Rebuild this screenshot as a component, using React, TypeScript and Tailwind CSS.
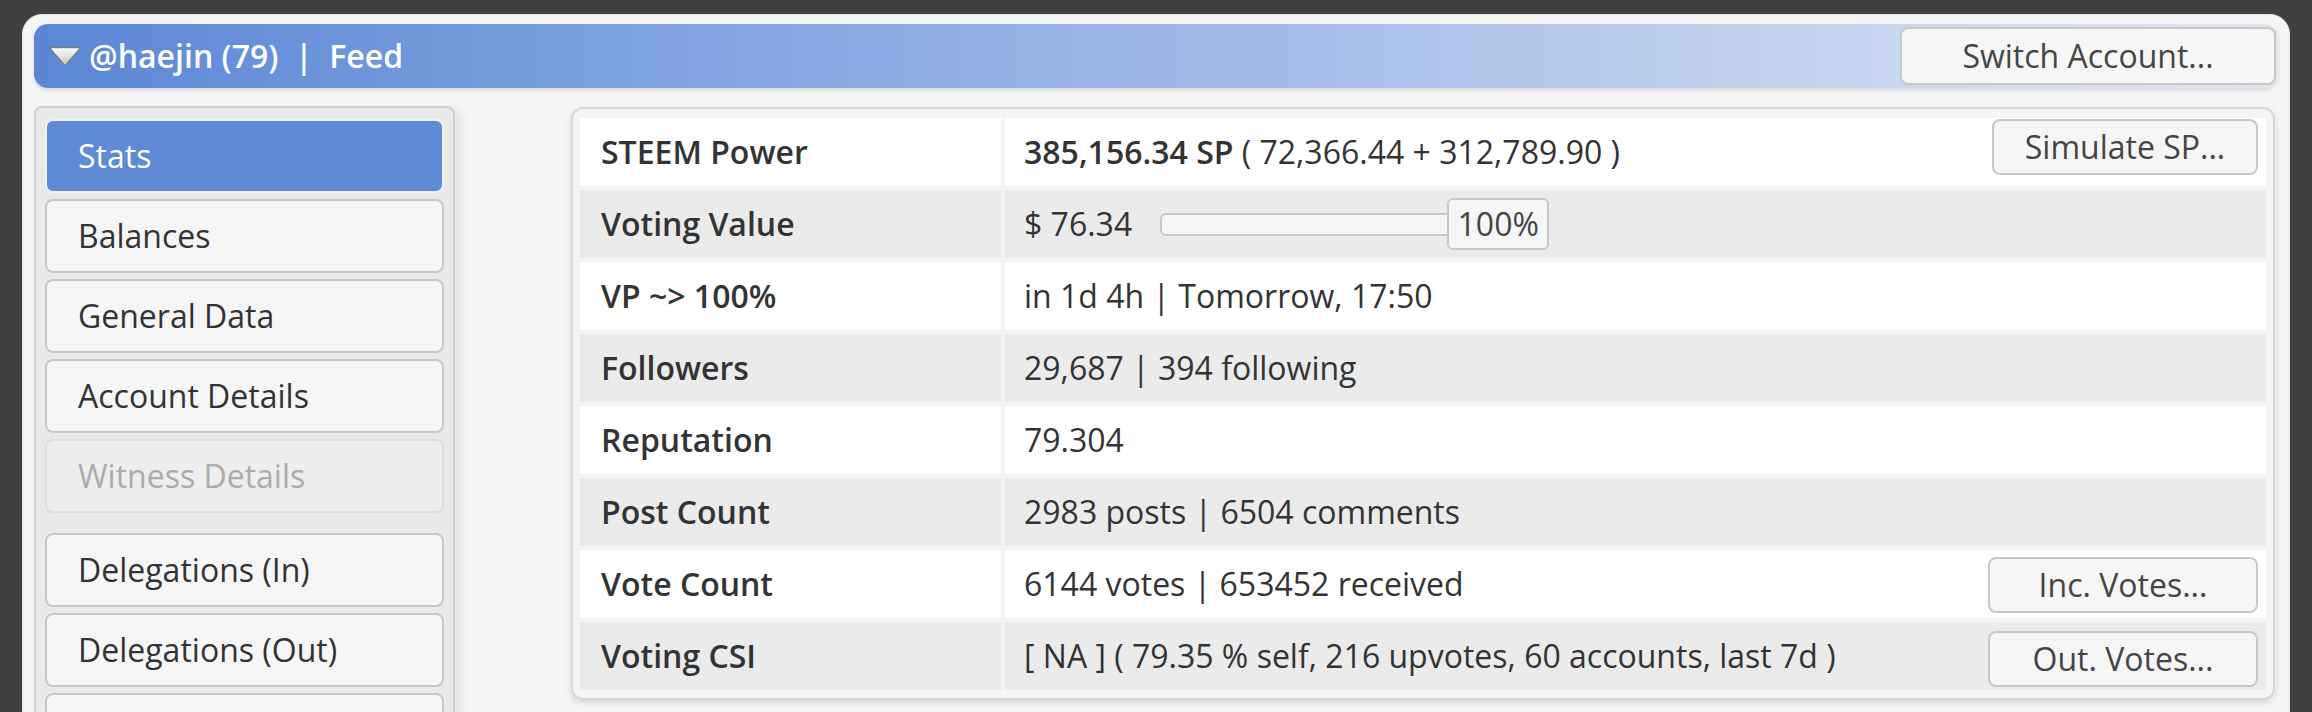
import React from "react";

const navItems = [
  { label: "Stats", state: "active" },
  { label: "Balances" },
  { label: "General Data" },
  { label: "Account Details" },
  { label: "Witness Details", state: "disabled" },
  { label: "Delegations (In)", gapBefore: true },
  { label: "Delegations (Out)" },
  { label: "" },
];

function Triangle() {
  return (
    <svg width="34" height="22" viewBox="0 0 34 22" className="shrink-0">
      <defs>
        <linearGradient id="tri" x1="0" y1="0" x2="0" y2="1">
          <stop offset="0" stopColor="#ffffff" />
          <stop offset="1" stopColor="#c4c4c4" />
        </linearGradient>
      </defs>
      <path
        d="M4 2.5 H30 Q32.5 2.5 31 4.8 L18.6 19 Q17 20.6 15.4 19 L3 4.8 Q1.5 2.5 4 2.5 Z"
        fill="url(#tri)"
        stroke="#7b7b7b"
        strokeWidth="1.4"
      />
    </svg>
  );
}

function Btn({ children, className = "" }: { children: React.ReactNode; className?: string }) {
  return (
    <button
      className={
        "flex items-center justify-center rounded-[8px] border-2 border-[#c8c8c8] bg-[#f6f6f6] text-[32px] text-[#454545] " +
        className
      }
    >
      {children}
    </button>
  );
}

function Row({
  label,
  odd,
  children,
}: {
  label: string;
  odd: boolean;
  children: React.ReactNode;
}) {
  const bg = odd ? "bg-white" : "bg-[#ebebeb]";
  return (
    <div className="grid h-[68px] grid-cols-[421px_1fr] gap-[4px]">
      <div className={"flex items-center pl-[21px] font-semibold " + bg}>{label}</div>
      <div className={"flex pl-[19px] pr-[8px] " + bg}>{children}</div>
    </div>
  );
}

export default function App() {
  return (
    <div className="h-[712px] w-full overflow-hidden bg-[#3f3f3f] pl-[22px] pt-[14px] font-['Open_Sans',sans-serif] text-[32px] text-[#333]">
      <div className="h-[760px] w-[2268px] rounded-[20px] border border-[#e2e2e2] bg-[#f5f5f5] px-[11px] pt-[9px]">
        {/* header */}
        <div className="flex h-[64px] items-center justify-between rounded-[14px] bg-gradient-to-r from-[#5b87d6] to-[#e0e7f3] pl-[14px] pr-[2px] shadow-[0_2px_4px_rgba(0,0,0,0.12)]">
          <div className="flex items-center gap-[7px] font-semibold text-white">
            <Triangle />
            <span>@haejin (79)&nbsp;&nbsp;|&nbsp;&nbsp;Feed</span>
          </div>
          <Btn className="h-[58px] w-[376px]">Switch Account...</Btn>
        </div>

        <div className="flex items-start">
          {/* nav */}
          <div className="mt-[18px] w-[421px] rounded-[8px] border-2 border-[#d0d0d0] bg-[#e9e9e9] px-[9px] pt-[11px] pb-[20px] shadow-[6px_4px_12px_rgba(0,0,0,0.08)]">
            <div className="flex flex-col gap-[6px]">
              {navItems.map((item, i) => (
                <div
                  key={i}
                  className={
                    "flex h-[74px] items-center rounded-[8px] border-2 pl-[31px] " +
                    (item.gapBefore ? "mt-[14px] " : "") +
                    (item.state === "active"
                      ? "border-[#eef2fa] bg-[#5e8ad6] text-white"
                      : item.state === "disabled"
                        ? "border-[#dedede] bg-[#eeeeee] text-[#ababab]"
                        : "border-[#c8c8c8] bg-[#f6f6f6] text-[#333]")
                  }
                >
                  {item.label}
                </div>
              ))}
            </div>
          </div>

          {/* stats table */}
          <div className="ml-[116px] mt-[19px] w-[1704px] rounded-[12px] border-2 border-[#d8d8d8] bg-[#f5f5f5] px-[7px] pt-[9px] pb-[8px] shadow-[0_3px_6px_rgba(0,0,0,0.12)]">
            <div className="flex flex-col gap-[4px]">
              <Row label="STEEM Power" odd>
                <div className="flex flex-1 items-center">
                  <span className="font-semibold">385,156.34 SP</span>
                  <span>&nbsp;( 72,366.44 + 312,789.90 )</span>
                </div>
                <Btn className="mt-[1px] h-[56px] w-[266px] self-start">Simulate SP...</Btn>
              </Row>
              <Row label="Voting Value" odd={false}>
                <div className="flex items-center">
                  <span>$ 76.34</span>
                  <div className="ml-[28px] h-[23px] w-[300px] rounded-[6px] border-2 border-[#c8c8c8] bg-[#f6f6f6]" />
                  <div className="-ml-[13px] flex h-[52px] w-[102px] items-center justify-center rounded-[6px] border-2 border-[#c8c8c8] bg-[#f6f6f6] text-[#454545]">
                    100%
                  </div>
                </div>
              </Row>
              <Row label="VP ~> 100%" odd>
                <div className="flex items-center">in 1d 4h | Tomorrow, 17:50</div>
              </Row>
              <Row label="Followers" odd={false}>
                <div className="flex items-center">29,687 | 394 following</div>
              </Row>
              <Row label="Reputation" odd>
                <div className="flex items-center">79.304</div>
              </Row>
              <Row label="Post Count" odd={false}>
                <div className="flex items-center">2983 posts | 6504 comments</div>
              </Row>
              <Row label="Vote Count" odd>
                <div className="flex flex-1 items-center">6144 votes | 653452 received</div>
                <Btn className="mt-[7px] h-[56px] w-[270px] self-start">Inc. Votes...</Btn>
              </Row>
              <Row label="Voting CSI" odd={false}>
                <div className="flex flex-1 items-center">
                  [ NA ] ( 79.35 % self, 216 upvotes, 60 accounts, last 7d )
                </div>
                <Btn className="mt-[9px] h-[56px] w-[270px] self-start">Out. Votes...</Btn>
              </Row>
            </div>
          </div>
        </div>
      </div>
    </div>
  );
}
